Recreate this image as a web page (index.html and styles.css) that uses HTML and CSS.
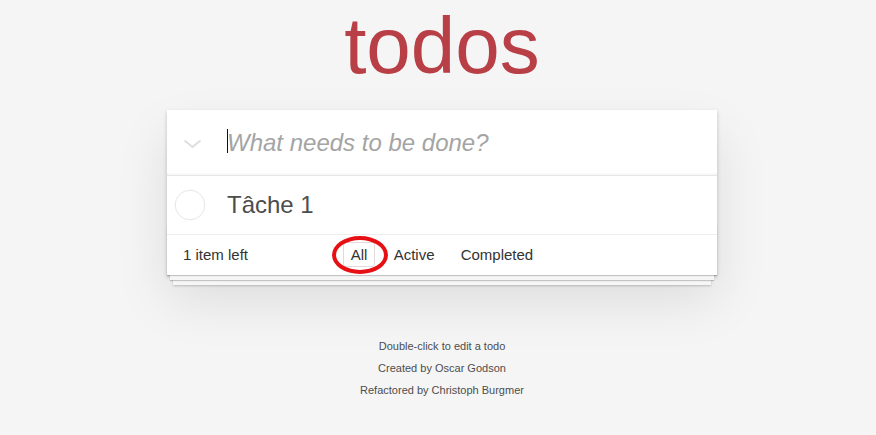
FILE: index.html
```html
<!DOCTYPE html>
<html lang="fr">
<head>
<meta charset="utf-8">
<title>todos</title>
<link rel="stylesheet" href="styles.css">
</head>
<body>
<div class="page">
  <h1 class="title">todos</h1>
  <section class="todoapp">
    <header class="header">
      <span class="toggle-all">
        <svg width="19" height="10" viewBox="0 0 19 10"><polyline points="1.5,1.5 9.5,8 17.5,1.5" fill="none" stroke="#dedede" stroke-width="2"/></svg>
      </span>
      <div class="new-todo">
        <span class="caret"></span>
        <span class="placeholder">What needs to be done?</span>
      </div>
    </header>
    <section class="main">
      <ul class="todo-list">
        <li class="todo">
          <span class="toggle">
            <svg width="32" height="32" viewBox="0 0 32 32"><circle cx="16" cy="16" r="14.8" fill="none" stroke="#e6e6e6" stroke-width="1"/></svg>
          </span>
          <label class="todo-label">Tâche 1</label>
        </li>
      </ul>
    </section>
    <footer class="footer">
      <span class="todo-count">1 item left</span>
      <ul class="filters">
        <li><a class="selected">All<span class="mark"></span></a></li>
        <li><a>Active</a></li>
        <li><a>Completed</a></li>
      </ul>
      <span></span>
    </footer>
  </section>
  <footer class="info">
    <p>Double-click to edit a todo</p>
    <p>Created by Oscar Godson</p>
    <p>Refactored by Christoph Burgmer</p>
  </footer>
</div>
</body>
</html>
```
FILE: styles.css
```css
html, body {
  margin: 0;
  padding: 0;
}
body {
  background: #f5f5f5;
  color: #4d4d4d;
  font: 14px "Liberation Sans", Arial, sans-serif;
  line-height: 1.4em;
  margin-left: 8px;
}
.page {
  width: 550px;
  margin: 0 auto;
}
.title {
  margin: 0 0 18px;
  font-size: 80px;
  font-weight: 400;
  line-height: normal;
  text-align: center;
  color: #b83f45;
}
.todoapp {
  background: #fff;
  margin: 0 0 40px;
  position: relative;
  box-shadow: 0 2px 4px 0 rgba(0, 0, 0, 0.2), 0 25px 50px 0 rgba(0, 0, 0, 0.1);
}
.header {
  position: relative;
  height: 65px;
  display: flex;
  align-items: center;
  box-shadow: inset 0 -2px 1px rgba(0, 0, 0, 0.03);
}
.toggle-all {
  width: 50px;
  display: flex;
  justify-content: center;
  margin-top: 2px;
}
.new-todo {
  position: relative;
  padding-left: 10px;
  font-size: 24px;
  line-height: 1.4em;
}
.placeholder {
  font-style: italic;
  color: #a4a4a4;
}
.caret {
  position: absolute;
  left: 10px;
  top: 3px;
  width: 1px;
  height: 24px;
  background: #111;
}
.main {
  position: relative;
  z-index: 2;
  border-top: 1px solid #e6e6e6;
}
.todo-list {
  margin: 0;
  padding: 0;
  list-style: none;
}
.todo {
  display: flex;
  align-items: center;
  font-size: 24px;
  border-bottom: 1px solid #ededed;
}
.toggle {
  width: 46px;
  box-sizing: border-box;
  padding-left: 7px;
  display: flex;
  justify-content: flex-start;
}
.toggle svg {
  display: block;
}
.todo-label {
  padding: 15px 15px 14px 14px;
  line-height: 1.2;
  color: #4d4d4d;
}
.footer {
  position: relative;
  color: #333;
  padding: 10px 15px;
  height: 20px;
  line-height: 20px;
  display: grid;
  grid-template-columns: 1fr auto 1fr;
  align-items: center;
  font-size: 15px;
}
.footer::before {
  content: "";
  position: absolute;
  right: 0;
  bottom: 0;
  left: 0;
  height: 50px;
  overflow: hidden;
  box-shadow: 0 1px 1px rgba(0, 0, 0, 0.2),
              0 8px 0 -3px #f6f6f6,
              0 9px 1px -3px rgba(0, 0, 0, 0.2),
              0 16px 0 -6px #f6f6f6,
              0 17px 2px -6px rgba(0, 0, 0, 0.2);
  z-index: 0;
}
.todo-count {
  position: relative;
  padding-left: 1px;
}
.filters {
  position: relative;
  margin: 0;
  padding: 0;
  list-style: none;
  text-align: center;
  white-space: nowrap;
}
.filters li {
  display: inline;
}
.filters a {
  position: relative;
  color: inherit;
  margin: 3px;
  padding: 3px 7px;
  text-decoration: none;
  border: 1px solid transparent;
  border-radius: 3px;
}
.filters a.selected {
  border-color: #e2dada;
}
.mark {
  position: absolute;
  left: -12px;
  top: -7px;
  width: 56px;
  height: 38px;
  box-sizing: border-box;
  border: 4px solid #e60f14;
  border-radius: 50%;
}
.info {
  margin: 66px auto 0;
  color: #4d4d4d;
  font-size: 11px;
  text-align: center;
}
.info p {
  line-height: 1;
  margin: 11px 0;
}
```
